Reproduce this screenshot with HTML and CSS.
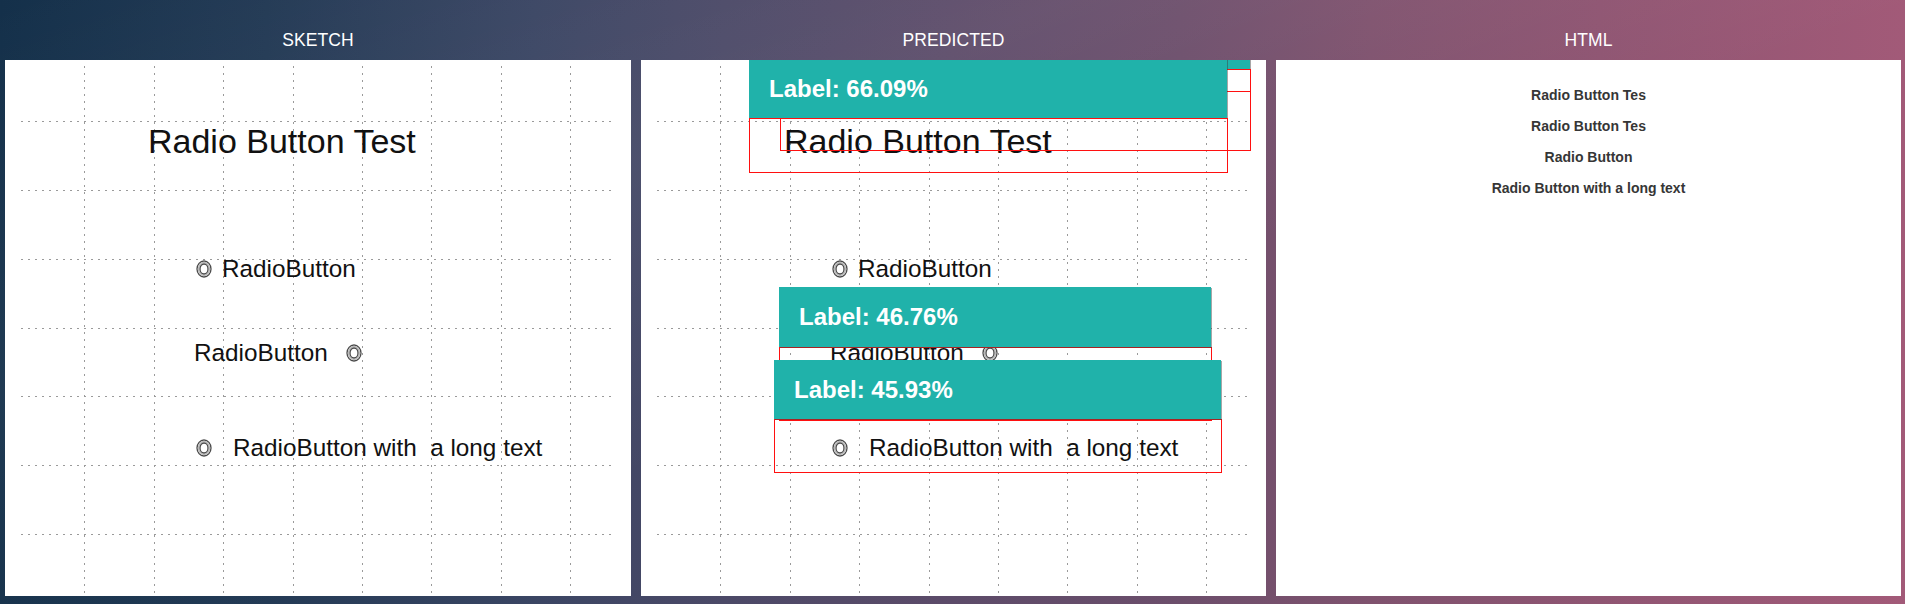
FILE: index.html
```html
<!DOCTYPE html>
<html>
<head>
<meta charset="utf-8">
<title>Sketch / Predicted / HTML</title>
<link rel="stylesheet" href="styles.css">
</head>
<body>
<div class="page">
  <section class="col">
    <div class="col-title">SKETCH</div>
    <div class="panel sketch">
      <svg class="grid" viewBox="0 0 626 536" width="626" height="536">
        <path class="gl" d="M79.5 6V536M149.5 6V536M218.5 6V536M288.5 6V536M357.5 6V536M426.5 6V536M496.5 6V536M565.5 6V536"/>
        <path class="gl" d="M16 61.5H606M16 130.5H606M16 199.5H606M16 268.5H606M16 336.5H606M16 405.5H606M16 474.5H606"/>
      </svg>
      <div class="s-title">Radio Button Test</div>
      <div class="s-row r1">
        <svg class="radio" viewBox="0 0 16 18" width="16" height="18"><ellipse cx="8" cy="9" rx="7" ry="8"/><ellipse class="mid" cx="8" cy="9" rx="5.5" ry="6.5"/><ellipse cx="8" cy="9" rx="4" ry="5"/></svg>
        <span>RadioButton</span>
      </div>
      <div class="s-row r2">
        <span>RadioButton</span>
        <svg class="radio" viewBox="0 0 16 18" width="16" height="18"><ellipse cx="8" cy="9" rx="7" ry="8"/><ellipse class="mid" cx="8" cy="9" rx="5.5" ry="6.5"/><ellipse cx="8" cy="9" rx="4" ry="5"/></svg>
      </div>
      <div class="s-row r3">
        <svg class="radio" viewBox="0 0 16 18" width="16" height="18"><ellipse cx="8" cy="9" rx="7" ry="8"/><ellipse class="mid" cx="8" cy="9" rx="5.5" ry="6.5"/><ellipse cx="8" cy="9" rx="4" ry="5"/></svg>
        <span>RadioButton with&nbsp; a long text</span>
      </div>
    </div>
  </section>

  <section class="col">
    <div class="col-title">PREDICTED</div>
    <div class="panel sketch">
      <svg class="grid" viewBox="0 0 626 536" width="626" height="536">
        <path class="gl" d="M79.5 6V536M149.5 6V536M218.5 6V536M288.5 6V536M357.5 6V536M426.5 6V536M496.5 6V536M565.5 6V536"/>
        <path class="gl" d="M16 61.5H606M16 130.5H606M16 199.5H606M16 268.5H606M16 336.5H606M16 405.5H606M16 474.5H606"/>
      </svg>
      <div class="s-title">Radio Button Test</div>
      <div class="s-row r1">
        <svg class="radio" viewBox="0 0 16 18" width="16" height="18"><ellipse cx="8" cy="9" rx="7" ry="8"/><ellipse class="mid" cx="8" cy="9" rx="5.5" ry="6.5"/><ellipse cx="8" cy="9" rx="4" ry="5"/></svg>
        <span>RadioButton</span>
      </div>
      <div class="s-row r2">
        <span>RadioButton</span>
        <svg class="radio" viewBox="0 0 16 18" width="16" height="18"><ellipse cx="8" cy="9" rx="7" ry="8"/><ellipse class="mid" cx="8" cy="9" rx="5.5" ry="6.5"/><ellipse cx="8" cy="9" rx="4" ry="5"/></svg>
      </div>
      <div class="s-row r3">
        <svg class="radio" viewBox="0 0 16 18" width="16" height="18"><ellipse cx="8" cy="9" rx="7" ry="8"/><ellipse class="mid" cx="8" cy="9" rx="5.5" ry="6.5"/><ellipse cx="8" cy="9" rx="4" ry="5"/></svg>
        <span>RadioButton with&nbsp; a long text</span>
      </div>

      <div class="tag tag-b"></div>
      <div class="det det-b"></div>
      <div class="det det-c"></div>
      <div class="tag tag-a">Label: 66.09%</div>
      <div class="det det-a"></div>
      <div class="det det-d"></div>
      <div class="tag tag-d">Label: 46.76%</div>
      <div class="det det-e"></div>
      <div class="tag tag-e">Label: 45.93%</div>
    </div>
  </section>

  <section class="col">
    <div class="col-title">HTML</div>
    <div class="panel html-out">
      <div class="h-line">Radio Button Tes</div>
      <div class="h-line">Radio Button Tes</div>
      <div class="h-line">Radio Button</div>
      <div class="h-line">Radio Button with a long text</div>
    </div>
  </section>
</div>
</body>
</html>
```

FILE: styles.css
```css
* { box-sizing: border-box; }

html, body {
  margin: 0;
  padding: 0;
  width: 1905px;
  height: 604px;
  overflow: hidden;
}

body {
  font-family: "Liberation Sans", Arial, sans-serif;
  background:
    linear-gradient(160deg, rgba(255,255,255,0) 0%, rgba(255,255,255,0.05) 30%, rgba(255,255,255,0) 55%),
    linear-gradient(90deg, #14304a 0%, #233a55 14%, #3a4563 28%, #4b4967 38%, #5c4b69 50%, #6c4e6b 62%, #7f526e 72%, #8f5572 84%, #a25a78 100%);
}

.page {
  display: grid;
  grid-template-columns: 626px 625px 625px;
  column-gap: 10px;
  padding: 0 3px 0 5px;
  height: 604px;
}

.col {
  display: flex;
  flex-direction: column;
}

.col-title {
  height: 60px;
  padding-top: 30px;
  line-height: 20px;
  font-size: 17.5px;
  color: #ffffff;
  text-align: center;
  letter-spacing: 0.1px;
}

.panel {
  position: relative;
  height: 536px;
  background: #ffffff;
  overflow: hidden;
}

.grid {
  position: absolute;
  left: 0;
  top: 0;
}

.gl {
  fill: none;
  stroke: #9a9a9a;
  stroke-width: 1;
  stroke-dasharray: 2 5;
}

.s-title {
  position: absolute;
  left: 143px;
  top: 64px;
  font-size: 34px;
  line-height: 34px;
  color: #111;
  white-space: nowrap;
}

.s-row {
  position: absolute;
  display: flex;
  align-items: center;
  font-size: 24.3px;
  line-height: 24px;
  color: #111;
  white-space: nowrap;
}

.r1 { left: 191px; top: 197px; gap: 10px; }
.r2 { left: 189px; top: 281px; gap: 18px; }
.r3 { left: 191px; top: 376px; gap: 21px; }

.radio ellipse {
  fill: none;
  stroke: #4a4a4a;
  stroke-width: 1.3;
}
.radio ellipse.mid {
  stroke: #b8b8b8;
  stroke-width: 1.4;
}

/* detection overlays */
.det {
  position: absolute;
  border: 1px solid #ff1010;
}

.tag {
  position: absolute;
  display: flex;
  align-items: center;
  padding-left: 20px;
  background: #20b2aa;
  color: #ffffff;
  font-weight: bold;
  font-size: 24px;
  white-space: nowrap;
  box-shadow: 1px 1px 0 rgba(60, 60, 60, 0.45);
}

.tag-b { left: 139px; top: -60px; width: 470px; height: 69px; }
.det-b { left: 139px; top: 9px; width: 471px; height: 82px; }
.det-c { left: 139px; top: 31px; width: 471px; height: 60px; }

.tag-a { left: 108px; top: -1px; width: 478px; height: 59px; }
.det-a { left: 108px; top: 58px; width: 479px; height: 55px; }

.det-d { left: 138px; top: 287px; width: 433px; height: 74px; }
.tag-d { left: 138px; top: 227px; width: 432px; height: 60px; }

.det-e { left: 133px; top: 359px; width: 448px; height: 54px; }
.tag-e { left: 133px; top: 300px; width: 447px; height: 59px; }

/* html output panel */
.html-out {
  padding-top: 20px;
  text-align: center;
}

.h-line {
  font-size: 14px;
  line-height: 31px;
  font-weight: bold;
  color: #363636;
}
```
